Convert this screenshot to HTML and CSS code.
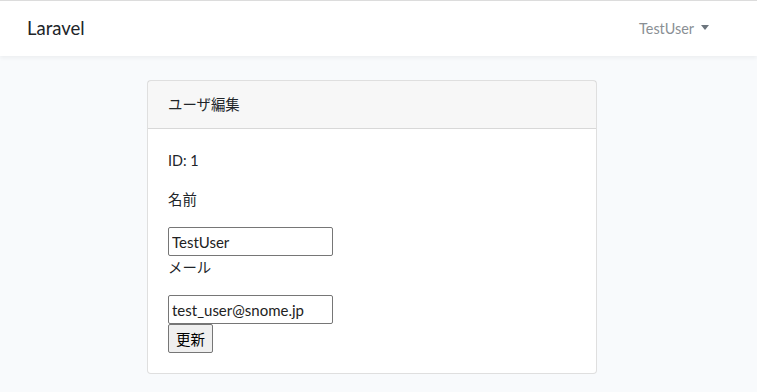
FILE: index.html
```html
<!DOCTYPE html>
<html lang="ja">
<head>
<meta charset="utf-8">
<title>Laravel</title>
<link rel="stylesheet" href="styles.css">
</head>
<body>
<nav class="navbar">
  <a class="brand" href="#">Laravel</a>
  <a class="user" href="#">TestUser <span class="caret"></span></a>
</nav>
<main class="main">
  <div class="card">
    <div class="card-header">ユーザ編集</div>
    <div class="card-body">
      <p class="line">ID: 1</p>
      <p class="line">名前</p>
      <input class="field" type="text" value="TestUser">
      <p class="line">メール</p>
      <input class="field" type="text" value="test_user@snome.jp">
      <button class="btn" type="button">更新</button>
    </div>
  </div>
</main>
</body>
</html>
```
FILE: styles.css
```css
* { box-sizing: border-box; }
html, body { margin: 0; padding: 0; }
body {
  background: #f8fafc;
  font-family: "Lato", "Noto Sans CJK JP", sans-serif;
  font-size: 14.4px;
  line-height: 1.6;
  color: #212529;
  border-top: 1px solid #dcdcdc;
}
.navbar {
  height: 55px;
  background: #fff;
  box-shadow: 0 2px 4px rgba(0,0,0,.05);
  display: flex;
  align-items: center;
  justify-content: space-between;
  padding: 0 48px 0 27px;
}
.brand {
  font-size: 18.5px;
  color: #212529;
  text-decoration: none;
}
.user {
  color: #8a8f94;
  text-decoration: none;
  font-size: 14.4px;
  display: flex;
  align-items: center;
  gap: 7px;
}
.caret {
  width: 0; height: 0;
  border-left: 4.5px solid transparent;
  border-right: 4.5px solid transparent;
  border-top: 5px solid #6c757d;
  margin-top: -2px;
}
.main {
  padding-top: 24px;
  display: flex;
  justify-content: center;
}
.card {
  width: 450px;
  margin-left: -13px;
  background: #fff;
  border: 1px solid rgba(0,0,0,.125);
  border-radius: 4px;
}
.card-header {
  height: 48px;
  padding: 12px 20px;
  background: rgba(0,0,0,.03);
  border-bottom: 1px solid rgba(0,0,0,.125);
}
.card-body {
  padding: 20px 20px 20px;
}
.line { margin: 0 0 16px; }
.field {
  display: block;
  width: 165px;
  height: 29px;
  border: 1px solid #767676;
  border-radius: 2px;
  font-family: "Lato", "Noto Sans CJK JP", sans-serif;
  font-size: 15px;
  padding: 1px 3px;
  color: #222;
  margin: 0;
}
.btn {
  display: block;
  margin: 0;
  height: 29px;
  width: 45px;
  padding: 1px 4px;
  background: #efefef;
  border: 1px solid #767676;
  border-radius: 2px;
  font-family: "Noto Sans CJK JP", sans-serif;
  font-size: 14.5px;
  color: #000;
}
```
